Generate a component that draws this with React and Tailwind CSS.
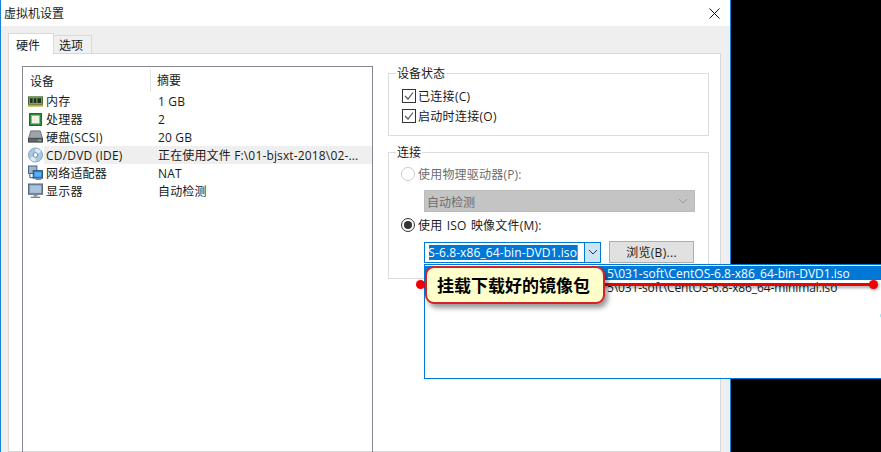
import React from "react";

const font = { fontFamily: '"Open Sans", "Noto Sans CJK SC", sans-serif' };

const MemoryIcon = () => (
  <svg width="16" height="12" viewBox="0 0 16 12" className="mt-[2px]">
    <rect x="0.5" y="0.5" width="15" height="8" fill="#7ab85a" stroke="#3d6b2a" />
    <rect x="2" y="2" width="3" height="5" fill="#2a2a2a" />
    <rect x="6" y="2" width="3" height="5" fill="#2a2a2a" />
    <rect x="10" y="2" width="4" height="5" fill="#2a2a2a" />
    <rect x="0" y="9" width="16" height="2" fill="#c9a53f" />
  </svg>
);

const CpuIcon = () => (
  <svg width="13" height="13" viewBox="0 0 13 13" className="ml-[1px]">
    <rect x="0.5" y="0.5" width="12" height="12" fill="#2f8a3e" stroke="#1f6a2c" />
    <rect x="2.5" y="2.5" width="8" height="8" fill="#f1f1e6" stroke="#9aa" strokeWidth="0.5" />
  </svg>
);

const DiskIcon = () => (
  <svg width="16" height="15" viewBox="0 0 16 15" className="-mt-[1px]">
    <path d="M3 1.500h10l2.500 8h-15z" fill="#9ba3ab" stroke="#6b7177" />
    <rect x="0.500" y="9.500" width="15" height="4" fill="#5f656b" stroke="#45494e" />
    <rect x="11" y="11" width="3" height="1" fill="#9fe08f" />
  </svg>
);

const CdIcon = () => (
  <svg width="16" height="16" viewBox="0 0 16 16">
    <circle cx="8" cy="8" r="7.5" fill="#a9c8e4" stroke="#7f9fbd" />
    <path d="M8 1a7 7 0 0 1 6 3.5L8 8z" fill="#dcebf7" />
    <path d="M8 15a7 7 0 0 1-6-3.500L8 8z" fill="#dcebf7" />
    <circle cx="8" cy="8" r="2.500" fill="#fff" stroke="#5f87ad" />
  </svg>
);

const NetworkIcon = () => (
  <svg width="16" height="16" viewBox="0 0 16 16">
    <rect x="0.500" y="0.500" width="9" height="8" fill="#9db4c8" stroke="#3f5f85" />
    <path d="M2 9v4h4" fill="none" stroke="#2f4f75" />
    <rect x="5.500" y="5.500" width="10" height="8" fill="#1f7fe0" stroke="#2f4f75" />
    <rect x="7" y="7" width="7" height="5" fill="#55b0f5" />
    <rect x="8" y="14" width="6" height="1.500" fill="#77889a" />
  </svg>
);

const MonitorIcon = () => (
  <svg width="16" height="16" viewBox="0 0 16 16">
    <rect x="0.500" y="0.500" width="15" height="11" fill="#6f8fae" stroke="#5a6570" />
    <rect x="2" y="2" width="12" height="8" fill="#a9c3dc" />
    <rect x="6" y="12" width="4" height="2" fill="#8a949c" />
    <rect x="3" y="14" width="10" height="1.500" fill="#7a848c" />
  </svg>
);

const devices = [
  { icon: <MemoryIcon />, name: "内存", summary: "1 GB" },
  { icon: <CpuIcon />, name: "处理器", summary: "2" },
  { icon: <DiskIcon />, name: "硬盘(SCSI)", summary: "20 GB" },
  { icon: <CdIcon />, name: "CD/DVD (IDE)", summary: "正在使用文件 F:\\01-bjsxt-2018\\02-...", selected: true },
  { icon: <NetworkIcon />, name: "网络适配器", summary: "NAT" },
  { icon: <MonitorIcon />, name: "显示器", summary: "自动检测" },
];

const Chevron = ({ color }) => (
  <svg width="10" height="6" viewBox="0 0 10 6">
    <path d="M1 1l4 4 4-4" fill="none" stroke={color} />
  </svg>
);

const Checkbox = ({ label }) => (
  <div className="flex items-center h-5 gap-[2px]">
    <div className="w-[14px] h-[14px] border border-[#333] bg-white flex items-center justify-center">
      <svg width="12" height="12" viewBox="0 0 12 12">
        <path d="M2 6l3 3 5-6.500" fill="none" stroke="#555" strokeWidth="1.200" />
      </svg>
    </div>
    <span className="pt-[1px] tracking-[0.3px]">{label}</span>
  </div>
);

const Radio = ({ label, checked, disabled }) => (
  <div className={`flex items-center h-5 gap-[3px] ${disabled ? "text-[#6d6d6d]" : ""}`}>
    <div className={`w-[14px] h-[14px] rounded-full border flex items-center justify-center bg-white ${disabled ? "border-[#ccc]" : "border-[#333]"}`}>
      {checked && <div className="w-[8px] h-[8px] rounded-full bg-[#333]" />}
    </div>
    <span className="pt-[1px] tracking-[0.2px] [word-spacing:1px]">{label}</span>
  </div>
);

export default function App() {
  return (
    <div className="relative w-[881px] h-[452px] bg-black overflow-hidden text-[12px] text-[#1a1a1a]" style={font}>
      <div className="w-[731px] h-full flex flex-col border-x border-[#1883d7]">
        {/* title bar */}
        <div className="h-[26px] bg-white flex items-center justify-between pl-[3px] pr-[10px] shrink-0">
          <span className="pt-[2px]">虚拟机设置</span>
          <svg width="11" height="11" viewBox="0 0 11 11">
            <path d="M0.500 0.500l10 10M10.500 0.500l-10 10" stroke="#111" />
          </svg>
        </div>

        <div className="flex-1 bg-[#efefef] pl-[7px] pr-[9px] pt-[7px] flex flex-col min-h-0">
          {/* tabs */}
          <div className="flex items-end h-[21px] shrink-0 relative z-10">
            <div className="w-[46px] h-[21px] bg-white border border-b-0 border-[#d9d9d9] flex items-center pl-[7px] pt-[3px]">硬件</div>
            <div className="w-[38px] h-[19px] bg-[#f0f0f0] border border-l-0 border-[#d9d9d9] flex items-center pl-[5px] pt-[3px]">选项</div>
          </div>

          <div className="flex-1 min-h-0 bg-white border border-[#d9d9d9] -mt-px pl-[13px] pt-[12px] flex gap-[15px]">
            {/* device list */}
            <div className="w-[351px] h-[420px] border border-[#828790] shrink-0">
              <div className="h-[25px] flex items-center">
                <div className="w-[128px] pl-[7px] pt-[3px] h-[23px] mt-px border-r border-[#e5e5e5] flex items-center">设备</div>
                <div className="pl-[6px] pt-[3px]">摘要</div>
              </div>
              {devices.map((d) => (
                <div key={d.name} className="h-[18px] flex items-center">
                  <div className="w-[20px] pl-[5px] shrink-0 flex items-center">{d.icon}</div>
                  <div className={`w-[108px] pl-[2px] pt-[2px] h-full flex items-center whitespace-nowrap ml-[1px] tracking-[0.2px] ${d.selected ? "bg-[#efefef]" : ""}`}>{d.name}</div>
                  <div className={`flex-1 pl-[6px] pt-[2px] h-full flex items-center whitespace-nowrap tracking-[0.15px] ${d.selected ? "bg-[#efefef]" : ""}`}>{d.summary}</div>
                </div>
              ))}
            </div>

            {/* right column */}
            <div className="w-[321px] shrink-0 pt-[1px] flex flex-col gap-[8px]">
              <fieldset className="h-[71px] border border-[#dcdcdc] px-[13px] -mt-[2px]">
                <legend className="px-[1px] ml-[-6px] h-[16px] leading-[18px]">设备状态</legend>
                <div className="mt-[5px]">
                  <Checkbox label="已连接(C)" />
                  <Checkbox label="启动时连接(O)" />
                </div>
              </fieldset>

              <fieldset className="h-[135px] border border-[#dcdcdc] px-[12px]">
                <legend className="px-[1px] ml-[-5px] h-[16px] leading-[18px]">连接</legend>
                <div className="mt-[4px]">
                  <Radio label="使用物理驱动器(P):" disabled />
                </div>
                <div className="mt-[6px] ml-[23px] w-[271px] h-[22px] bg-[#c4c4c4] border border-[#bbb] flex items-center justify-between pl-[2px] pr-[6px] text-[#6d6d6d]">
                  <span className="pt-[3px]">自动检测</span>
                  <Chevron color="#9a9a9a" />
                </div>
                <div className="mt-[3px]">
                  <Radio label="使用 ISO 映像文件(M):" checked />
                </div>
                <div className="mt-[6px] ml-[23px] flex items-center gap-[8px]">
                  <div className="w-[177px] h-[21px] border border-[#0078d7] flex bg-white">
                    <div className="flex-1 overflow-hidden pl-[4px] pr-[6px] flex items-center">
                      <div className="w-full h-[15px] bg-[#0078d7] text-white overflow-hidden flex justify-end items-center whitespace-nowrap leading-[15px] border-r border-[#e8771c] tracking-[0.1px]">
                        CentOS-6.8-x86_64-bin-DVD1.iso
                      </div>
                    </div>
                    <div className="w-[16px] bg-[#cce4f7] border-l border-[#0078d7] flex items-center justify-center">
                      <Chevron color="#333" />
                    </div>
                  </div>
                  <div className="w-[85px] h-[22px] bg-[#e1e1e1] border border-[#adadad] flex items-center justify-center pt-[2px] tracking-[0.3px]">浏览(B)...</div>
                </div>
              </fieldset>
            </div>
          </div>
        </div>
      </div>

      {/* dropdown list */}
      <div className="absolute left-[424px] top-[264px] w-[500px] h-[115px] bg-white border border-[#0078d7] whitespace-nowrap">
        <div className="h-[14px] mt-[1px] bg-[#0078d7] text-white leading-[15px] pl-[182px]">5\031-soft\CentOS-6.8-x86_64-bin-DVD1.iso</div>
        <div className="h-[14px] leading-[15px] pl-[182px] tracking-[-0.12px]">5\031-soft\CentOS-6.8-x86_64-minimal.iso</div>
      </div>
      <div className="absolute left-[880px] top-[314px] w-[1px] h-[3px] bg-[#a8e8f0]" />

      {/* annotation line */}
      <div className="absolute left-[420px] top-[283px] w-[453px] h-[3px] bg-[#f00000] shadow-[1px_2px_3px_rgba(0,0,0,0.35)]" />
      <div className="absolute left-[416px] top-[280px] w-[9px] h-[9px] rounded-full bg-[#f00000]" />
      <div className="absolute left-[869px] top-[280px] w-[9px] h-[9px] rounded-full bg-[#f00000] shadow-[1px_1px_3px_rgba(0,0,0,0.4)]" />

      {/* callout */}
      <div
        className="absolute left-[425px] top-[266px] w-[180px] h-[38px] rounded-[9px] border-2 border-[#d9202a] bg-[#ffffcc] flex items-center justify-center pr-[3px] text-[17px] font-bold text-black shadow-[3px_4px_5px_rgba(0,0,0,0.4)]"
        style={{ fontFamily: '"Noto Sans CJK SC", sans-serif' }}
      >
        挂载下载好的镜像包
      </div>
    </div>
  );
}
